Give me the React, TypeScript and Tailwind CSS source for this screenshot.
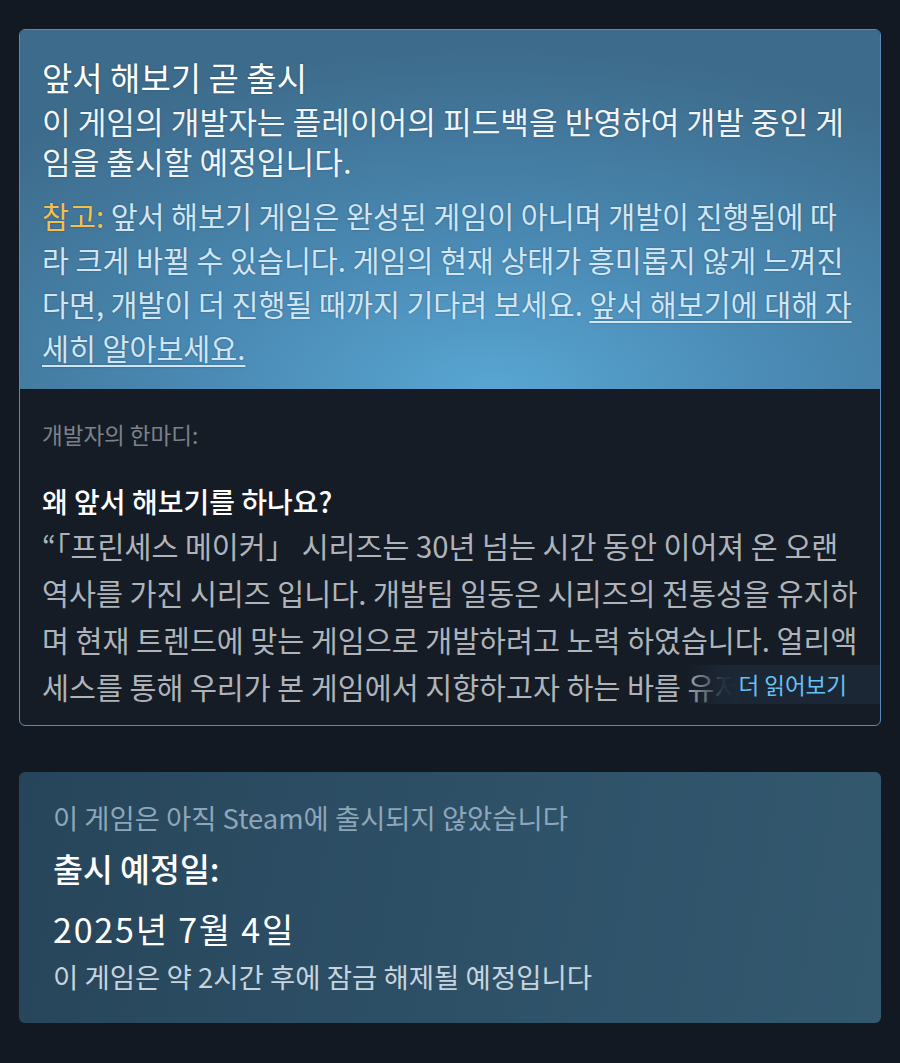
import React from "react";

const intro = [
  "이 게임의 개발자는 플레이어의 피드백을 반영하여 개발 중인 게",
  "임을 출시할 예정입니다.",
];

const devLines = [
  "“「프린세스 메이커」 시리즈는 30년 넘는 시간 동안 이어져 온 오랜",
  "역사를 가진 시리즈 입니다. 개발팀 일동은 시리즈의 전통성을 유지하",
  "며 현재 트렌드에 맞는 게임으로 개발하려고 노력 하였습니다. 얼리액",
  "세스를 통해 우리가 본 게임에서 지향하고자 하는 바를 유저",
];

function EarlyAccessCard() {
  return (
    <section className="overflow-hidden rounded-[6px] border border-[#5a8ab8] bg-[#161c26]">
      {/* header with the blue glow */}
      <div className="bg-[radial-gradient(ellipse_80%_95%_at_55%_100%,#58a6d3_0%,#4a8ab4_42%,#3d6b8b_100%)] px-[22px] pt-[27px] pb-[20px] [text-shadow:0_0_2px_rgba(10,25,40,0.35)]">
        <h1 className="whitespace-nowrap text-[33px] leading-[40px] text-white">
          앞서 해보기 곧 출시
        </h1>
        <p className="mt-[4px] text-[31.2px] leading-[40px] text-[#f0f4f7]">
          {intro.map((l) => (
            <span key={l} className="block whitespace-nowrap">
              {l}
            </span>
          ))}
        </p>
        <p className="mt-[12px] text-[29.3px] leading-[44px] text-[#d0e5f5]">
          <span className="block whitespace-nowrap">
            <span className="text-[#f3c14b]">참고:</span> 앞서 해보기 게임은 완성된 게임이 아니며 개발이 진행됨에 따
          </span>
          <span className="block whitespace-nowrap">
            라 크게 바뀔 수 있습니다. 게임의 현재 상태가 흥미롭지 않게 느껴진
          </span>
          <span className="block whitespace-nowrap">
            다면, 개발이 더 진행될 때까지 기다려 보세요.{" "}
            <a href="#" className="underline decoration-[1.5px] underline-offset-[5px]">
              앞서 해보기에 대해 자
            </a>
          </span>
          <span className="block whitespace-nowrap">
            <a href="#" className="underline decoration-[1.5px] underline-offset-[5px]">
              세히 알아보세요.
            </a>
          </span>
        </p>
      </div>

      {/* developer note */}
      <div className="relative border-t border-[#10151c] px-[22px] pt-[30px] pb-[15px]">
        <div className="text-[22.5px] leading-[28px] text-[#7b828b]">개발자의 한마디:</div>
        <h2 className="mt-[36px] whitespace-nowrap text-[28px] font-medium leading-[34px] text-white">
          왜 앞서 해보기를 하나요?
        </h2>
        <div className="mt-[4px] text-[29.3px] leading-[47px] text-[#aeb4ba]">
          {devLines.map((l) => (
            <span key={l} className="block whitespace-nowrap">
              {l}
            </span>
          ))}
        </div>
        <div className="absolute right-0 bottom-[21px] flex h-[39px] w-[196px] items-center justify-end bg-[linear-gradient(90deg,rgba(28,39,53,0)_0%,rgba(28,39,53,0.92)_20%,#1c2735_28%)] pr-[33px]">
          <span className="whitespace-nowrap text-[22.5px] leading-none text-[#66c0f4]">더 읽어보기</span>
        </div>
      </div>
    </section>
  );
}

function ReleaseCard() {
  return (
    <section className="mt-[46px] rounded-[6px] bg-[linear-gradient(100deg,#27455a_0%,#2e5168_55%,#33596f_100%)] px-[34px] pt-[29px] pb-[31px]">
      <div className="whitespace-nowrap text-[27.4px] leading-[32px] text-[#8ea6b9]">
        이 게임은 아직 Steam에 출시되지 않았습니다
      </div>
      <div className="mt-[16px] text-[32.5px] font-medium leading-[38px] text-white">출시 예정일:</div>
      <div className="mt-[22px] text-[34px] leading-[40px] tracking-[1.8px] text-white">2025년 7월 4일</div>
      <div className="mt-[11px] whitespace-nowrap text-[27.5px] leading-[32px] text-[#c6d4df]">
        이 게임은 약 2시간 후에 잠금 해제될 예정입니다
      </div>
    </section>
  );
}

export default function App() {
  return (
    <div className="min-h-[1063px] bg-[#131922] px-[19px] pt-[29px] pb-[40px] font-['Noto_Sans_CJK_KR','Noto_Sans',sans-serif]">
      <EarlyAccessCard />
      <ReleaseCard />
    </div>
  );
}
